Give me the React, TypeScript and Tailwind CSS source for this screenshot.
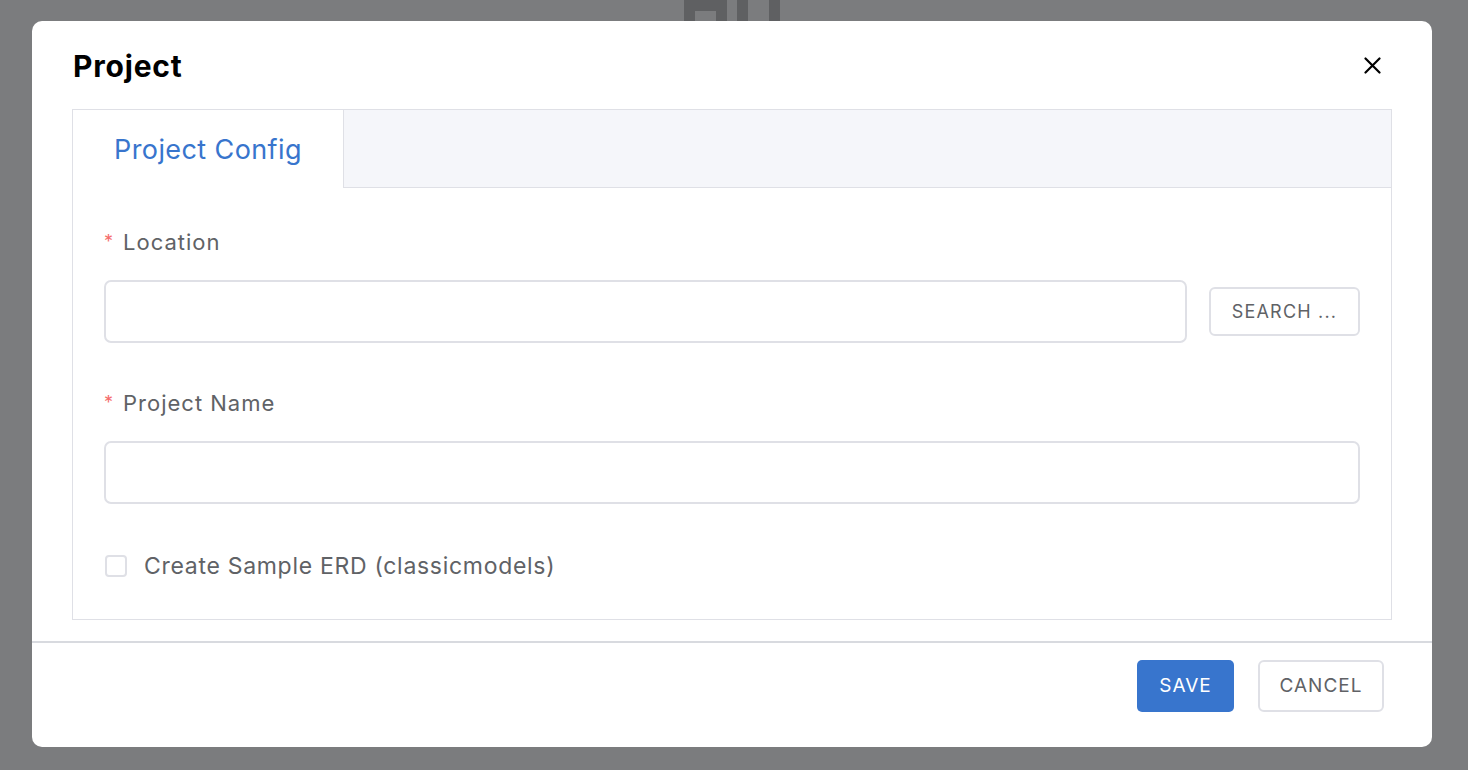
import React, { useState } from 'react';

const font = { fontFamily: 'Inter, "Noto Sans", sans-serif' };

const Label: React.FC<{ text: string }> = ({ text }) => (
  <div className="flex h-7 items-center text-[22px] tracking-[1px] text-[#606266]">
    <span className="mr-[9px] text-[18px] leading-none text-[#f56c6c]">*</span>
    {text}
  </div>
);

export default function App() {
  const [location, setLocation] = useState('');
  const [name, setName] = useState('');
  const [sample, setSample] = useState(false);

  return (
    <div className="relative h-[770px] w-full overflow-hidden bg-[#7b7c7e]" style={font}>
      {/* dimmed app content peeking out above the dialog */}
      <svg className="absolute left-[684px] top-0" width="96" height="21" viewBox="0 0 96 21">
        <path d="M0 0h43v21H32V11H11v10H0z" fill="#5f6062" />
        <rect x="53" y="0" width="11" height="21" fill="#5f6062" />
        <rect x="85" y="0" width="11" height="21" fill="#5f6062" />
      </svg>

      <div className="relative flex pl-[32px] pt-[21px]">
        <div className="flex h-[726px] w-[1400px] flex-col rounded-[10px] bg-white">
          {/* header */}
          <div className="flex h-[88px] items-start justify-between pl-[41px] pr-[51px] pt-[27px]">
            <h2 className="text-[30px] font-bold leading-[36px] tracking-[0.8px] text-black">Project</h2>
            <button className="mt-[9px] text-black" aria-label="close">
              <svg width="17" height="17" viewBox="0 0 17 17">
                <path d="M1.5 1.5l14 14M15.5 1.5l-14 14" stroke="currentColor" strokeWidth="2.2" strokeLinecap="round" />
              </svg>
            </button>
          </div>

          {/* tabs */}
          <div className="mx-[40px] h-[511px] border border-[#dfe0e6]">
            <div className="flex h-[78px] bg-[#f5f6fa]">
              <div className="flex w-[271px] items-center justify-center border-r border-[#dfe0e6] bg-white pt-[2px] text-[27px] tracking-[0.4px] text-[#3875cd]">
                Project Config
              </div>
              <div className="flex-1 border-b border-[#dfe0e6]" />
            </div>

            <div className="px-[31px] pt-[40px]">
              <Label text="Location" />
              <div className="mt-[24px] flex items-center gap-[22px]">
                <input
                  value={location}
                  onChange={e => setLocation(e.target.value)}
                  className="h-[63px] min-w-0 flex-1 rounded-[7px] border-2 border-[#dfe0e6] px-4 text-[20px] outline-none"
                />
                <button className="h-[49px] w-[151px] shrink-0 rounded-[6px] border-2 border-[#dfe0e6] text-[18px] tracking-[1.2px] text-[#606266]">
                  SEARCH ...
                </button>
              </div>

              <div className="mt-[46px]">
                <Label text="Project Name" />
              </div>
              <input
                value={name}
                onChange={e => setName(e.target.value)}
                className="mt-[24px] h-[63px] w-full rounded-[7px] border-2 border-[#dfe0e6] px-4 text-[20px] outline-none"
              />

              <label className="mt-[48px] flex h-7 cursor-pointer items-center gap-[17px] text-[23px] tracking-[0.7px] text-[#606266]">
                <input
                  type="checkbox"
                  checked={sample}
                  onChange={e => setSample(e.target.checked)}
                  className="ml-px h-[22px] w-[22px] appearance-none rounded-[4px] border-2 border-[#dfe0e6] bg-white checked:border-[#3875cd] checked:bg-[#3875cd]"
                />
                Create Sample ERD (classicmodels)
              </label>
            </div>
          </div>

          {/* footer */}
          <div className="mt-[21px] flex justify-end gap-[24px] border-t-2 border-[#d8dadf] pr-[48px] pt-[17px]">
            <button className="h-[52px] w-[97px] rounded-[5px] bg-[#3875cd] text-[19px] tracking-[1px] text-white">
              SAVE
            </button>
            <button className="h-[52px] w-[126px] rounded-[6px] border-2 border-[#dfe0e6] text-[19px] tracking-[1px] text-[#606266]">
              CANCEL
            </button>
          </div>
        </div>
      </div>
    </div>
  );
}
